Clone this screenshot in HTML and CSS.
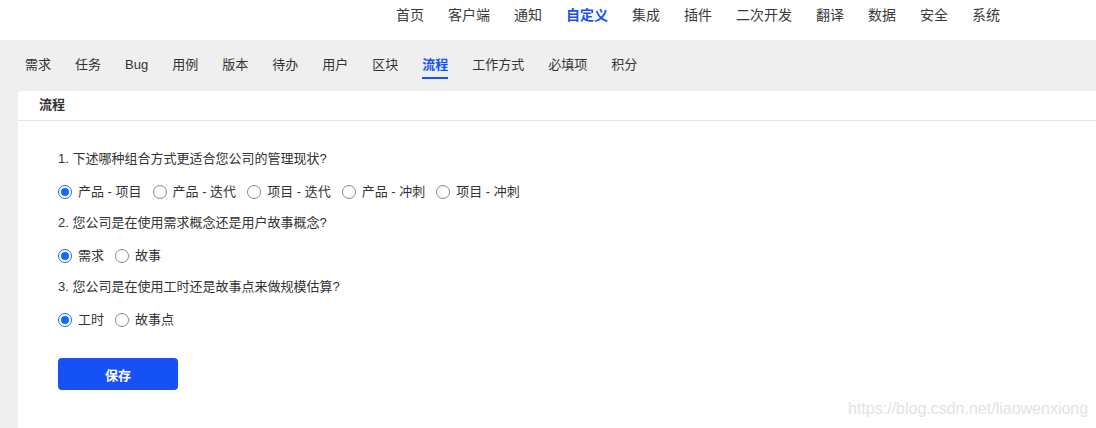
FILE: index.html
```html
<!DOCTYPE html>
<html lang="zh-CN">
<head>
<meta charset="utf-8">
<title>流程</title>
<link rel="stylesheet" href="styles.css">
</head>
<body>
<header class="topbar">
  <nav class="topnav">
    <a class="topnav-item">首页</a>
    <a class="topnav-item">客户端</a>
    <a class="topnav-item">通知</a>
    <a class="topnav-item active">自定义</a>
    <a class="topnav-item">集成</a>
    <a class="topnav-item">插件</a>
    <a class="topnav-item">二次开发</a>
    <a class="topnav-item">翻译</a>
    <a class="topnav-item">数据</a>
    <a class="topnav-item">安全</a>
    <a class="topnav-item">系统</a>
  </nav>
</header>
<main class="main">
  <nav class="tabs">
    <a class="tab">需求</a>
    <a class="tab">任务</a>
    <a class="tab">Bug</a>
    <a class="tab">用例</a>
    <a class="tab">版本</a>
    <a class="tab">待办</a>
    <a class="tab">用户</a>
    <a class="tab">区块</a>
    <a class="tab active">流程</a>
    <a class="tab">工作方式</a>
    <a class="tab">必填项</a>
    <a class="tab">积分</a>
  </nav>
  <section class="card">
    <div class="card-header">流程</div>
    <div class="card-body">
      <div class="question">1. 下述哪种组合方式更适合您公司的管理现状?</div>
      <div class="options">
        <label class="option"><span class="radio checked"></span>产品 - 项目</label>
        <label class="option"><span class="radio"></span>产品 - 迭代</label>
        <label class="option"><span class="radio"></span>项目 - 迭代</label>
        <label class="option"><span class="radio"></span>产品 - 冲刺</label>
        <label class="option"><span class="radio"></span>项目 - 冲刺</label>
      </div>
      <div class="question">2. 您公司是在使用需求概念还是用户故事概念?</div>
      <div class="options">
        <label class="option"><span class="radio checked"></span>需求</label>
        <label class="option"><span class="radio"></span>故事</label>
      </div>
      <div class="question">3. 您公司是在使用工时还是故事点来做规模估算?</div>
      <div class="options">
        <label class="option"><span class="radio checked"></span>工时</label>
        <label class="option"><span class="radio"></span>故事点</label>
      </div>
      <button class="btn-save">保存</button>
    </div>
    <div class="watermark">https://blog.csdn.net/liaowenxiong</div>
  </section>
</main>
</body>
</html>
```
FILE: styles.css
```css
html, body {
  margin: 0;
  padding: 0;
  height: 100%;
  overflow: hidden;
}
body {
  font-family: "Liberation Sans", "Noto Sans CJK SC", sans-serif;
  color: #333;
  background: #efefef;
  display: flex;
  flex-direction: column;
}
.topbar {
  height: 40px;
  flex: none;
  background: #fff;
  display: flex;
  justify-content: flex-end;
  align-items: center;
  padding-right: 96px;
}
.topnav {
  display: flex;
  gap: 24px;
  font-size: 14px;
  line-height: 20px;
  margin-top: -10px;
}
.topnav-item {
  color: #3a3a3a;
}
.topnav-item.active {
  color: #1651f5;
  font-weight: bold;
}
.main {
  flex: 1;
  display: flex;
  flex-direction: column;
  padding: 0 0 0 18px;
}
.tabs {
  display: flex;
  gap: 24px;
  padding: 15px 0 0 7px;
  height: 36px;
  box-sizing: border-box;
  font-size: 13px;
  line-height: 20px;
  flex: none;
}
.tab {
  color: #333;
  position: relative;
  height: 24px;
}
.tab.active {
  color: #1651f5;
  font-weight: bold;
}
.tab.active::after {
  content: "";
  position: absolute;
  left: 0;
  right: 0;
  top: 22px;
  height: 2px;
  background: #1651f5;
}
.card {
  position: relative;
  flex: 1;
  margin-top: 15px;
  background: #fff;
  border-radius: 4px 0 0 0;
  margin-right: -10px;
}
.card-header {
  height: 29px;
  padding-left: 21px;
  font-size: 13px;
  font-weight: bold;
  line-height: 27px;
  color: #333;
  border-bottom: 1px solid #e6e6e6;
}
.card-body {
  padding: 28px 0 0 40px;
  font-size: 13px;
  line-height: 20px;
}
.question {
  margin-bottom: 13px;
}
.options {
  display: flex;
  gap: 11px;
  margin-bottom: 11px;
}
.option {
  display: flex;
  align-items: center;
  gap: 6px;
}
.radio {
  width: 12px;
  height: 12px;
  border: 1px solid #8a8a8a;
  border-radius: 50%;
  box-sizing: content-box;
  position: relative;
  flex: none;
}
.radio.checked {
  border-color: #1a66ff;
}
.radio.checked::after {
  content: "";
  position: absolute;
  left: 2px;
  top: 2px;
  width: 8px;
  height: 8px;
  border-radius: 50%;
  background: #1a66ff;
}
.btn-save {
  margin-top: 17px;
  width: 120px;
  height: 32px;
  border: none;
  border-radius: 4px;
  background: #1651f5;
  color: #fff;
  font-family: inherit;
  font-size: 13px;
  font-weight: bold;
}
.watermark {
  position: absolute;
  left: 830px;
  top: 309px;
  font-family: "Liberation Sans", sans-serif;
  font-size: 16px;
  color: #e3e3e3;
}
```
